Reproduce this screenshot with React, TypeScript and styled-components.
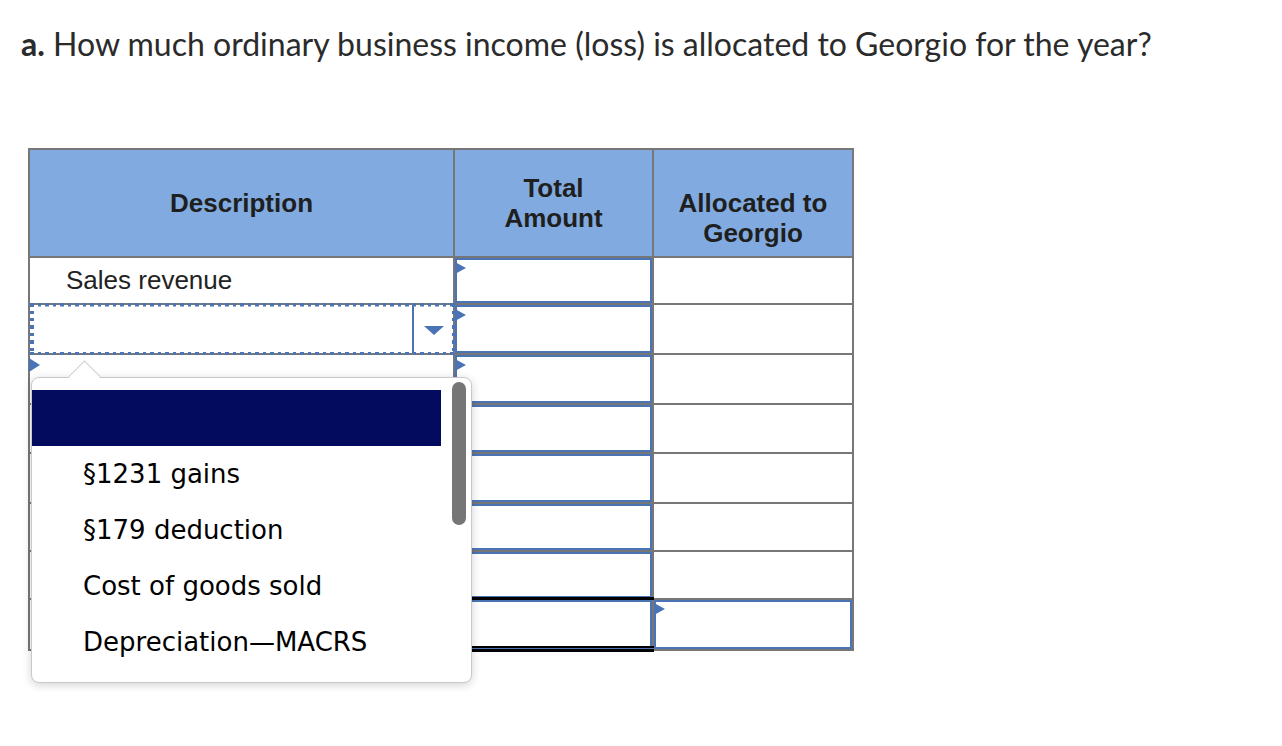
import styled, { createGlobalStyle } from 'styled-components';

//palette
const BLUE = '#4a74b5';
const GRID = '#777777';
const HEAD = '#81abe0';

const GlobalStyle = createGlobalStyle`
    html, body {
        margin: 0;
        padding: 0;
        background: #ffffff;
    }
    body {
        font-family: "Liberation Sans", Arial, sans-serif;
    }
`;

const Page = styled.div`
    padding: 24px 0 40px 21px;
`;

const Question = styled.h1`
    margin: 0;
    font-family: Lato, "Open Sans", sans-serif;
    font-weight: 400;
    font-size: 32px;
    line-height: 40px;
    color: #2b2b2b;

    b {
        font-weight: 700;
    }
`;

const TableWrap = styled.div`
    position: relative;
    width: 826px;
    margin: 84px 0 0 7px;
`;

const Grid = styled.div<{ $rows: string }>`
    display: grid;
    grid-template-columns: 423px 197px 198px;
    grid-template-rows: ${({ $rows }) => $rows};
    gap: 2px;
    padding: 2px;
    background: ${GRID};
`;

const HeadCell = styled.div<{ $drop?: number }>`
    display: flex;
    align-items: center;
    justify-content: center;
    padding-top: ${({ $drop }) => $drop ?? 0}px;
    background: ${HEAD};
    text-align: center;
    font-size: 26px;
    line-height: 30px;
    font-weight: 700;
    color: #1f1f1f;
`;

const Cell = styled.div`
    position: relative;
    background: #ffffff;
`;

const DescText = styled(Cell)`
    display: flex;
    align-items: center;
    padding-left: 36px;
    font-size: 26px;
    color: #222222;
`;

const Marker = styled.span<{ $x?: number; $y?: number; $half?: number }>`
    position: absolute;
    left: ${({ $x }) => $x ?? 0}px;
    top: ${({ $y }) => $y ?? 4}px;
    width: 0;
    height: 0;
    border-left: 11px solid ${BLUE};
    border-top: ${({ $half }) => $half ?? 6}px solid transparent;
    border-bottom: ${({ $half }) => $half ?? 6}px solid transparent;
    z-index: 2;
`;

// the focused select: square dotted frame drawn with gradients
const dots = (dir: string) =>
    `repeating-linear-gradient(${dir}, ${BLUE} 0 3.5px, transparent 3.5px 7.5px)`;

const FocusSelect = styled(Cell)`
    display: flex;
    justify-content: flex-end;

    &::after {
        content: '';
        position: absolute;
        left: 0;
        right: -2px;
        top: -2px;
        bottom: -2px;
        background:
            ${dots('90deg')} top / 100% 3.5px no-repeat,
            ${dots('90deg')} bottom / 100% 3.5px no-repeat,
            ${dots('180deg')} left / 4px 100% no-repeat,
            ${dots('180deg')} right / 3.5px 100% no-repeat;
        pointer-events: none;
    }
`;

const ArrowButton = styled.div`
    width: 39px;
    display: flex;
    align-items: center;
    justify-content: center;
    border-left: 2px solid ${BLUE};

    &::before {
        content: '';
        margin-top: 2px;
        border-top: 9px solid ${BLUE};
        border-left: 10px solid transparent;
        border-right: 10px solid transparent;
    }
`;

const InputBox = styled(Cell)<{ $rule?: 'single' | 'double' }>`
    box-shadow: inset 0 0 0 2px ${BLUE};

    &::after {
        content: '';
        display: ${({ $rule }) => ($rule ? 'block' : 'none')};
        position: absolute;
        left: 0;
        right: -2px;
        bottom: ${({ $rule }) => ($rule === 'double' ? -3 : -2)}px;
        height: ${({ $rule }) => ($rule === 'double' ? 1 : 0)}px;
        border-top: ${({ $rule }) => ($rule === 'double' ? 2 : 3)}px solid #000;
        border-bottom: ${({ $rule }) => ($rule === 'double' ? 3 : 0)}px solid #000;
    }
`;

//dropdown
const Popup = styled.div`
    position: absolute;
    left: 3px;
    top: 229px;
    width: 441px;
    height: 306px;
    box-sizing: border-box;
    padding: 12px 0 0 0;
    background: #ffffff;
    border: 1.5px solid #c9c9c9;
    border-radius: 8px;
    box-shadow: 0 2px 10px rgba(0, 0, 0, 0.18);
    z-index: 10;

    &::before {
        content: '';
        position: absolute;
        left: 41px;
        top: -13px;
        width: 22px;
        height: 22px;
        background: #ffffff;
        border-left: 1.5px solid #cfcfcf;
        border-top: 1.5px solid #cfcfcf;
        transform: rotate(45deg);
    }
`;

const OptionList = styled.ul`
    position: relative;
    margin: 0;
    padding: 0;
    width: 409px;
    list-style: none;
    font-family: "DejaVu Sans", Verdana, sans-serif;
    font-size: 26px;
    color: #000000;
`;

const Option = styled.li<{ $active?: boolean }>`
    height: 56px;
    display: flex;
    align-items: center;
    padding-left: 51px;
    background: ${({ $active }) => ($active ? '#020b5d' : 'transparent')};
    color: ${({ $active }) => ($active ? '#ffffff' : '#000000')};
`;

const Thumb = styled.div`
    position: absolute;
    right: 5px;
    top: 4px;
    width: 14px;
    height: 143px;
    border-radius: 7px;
    background: #767676;
`;

type Rule = 'single' | 'double';

interface Row {
    h: number;
    desc: 'text' | 'focus' | 'select' | 'blank';
    label?: string;
    rule?: Rule;
    allocInput?: boolean;
}

const rows: Row[] = [
    { h: 45, desc: 'text', label: 'Sales revenue' },
    { h: 48, desc: 'focus' },
    { h: 48, desc: 'select' },
    { h: 47, desc: 'blank' },
    { h: 48, desc: 'blank' },
    { h: 46, desc: 'blank' },
    { h: 46, desc: 'blank', rule: 'single' },
    { h: 49, desc: 'blank', rule: 'double', allocInput: true },
];

const options = ['', '§1231 gains', '§179 deduction', 'Cost of goods sold', 'Depreciation—MACRS'];

const DescCell = ({ row }: { row: Row }) => {
    if (row.desc === 'text') return <DescText>{row.label}</DescText>;
    if (row.desc === 'focus')
        return (
            <FocusSelect>
                <ArrowButton />
            </FocusSelect>
        );
    return <Cell>{row.desc === 'select' && <Marker $x={-1} $y={3} $half={7} />}</Cell>;
};

const DescRow = ({ row }: { row: Row }) => (
    <>
        <DescCell row={row} />
        <InputBox $rule={row.rule}>
            <Marker />
        </InputBox>
        {row.allocInput ? (
            <InputBox>
                <Marker $y={3} />
            </InputBox>
        ) : (
            <Cell />
        )}
    </>
);

export default function App() {
    const template = ['106px', ...rows.map((r) => `${r.h}px`)].join(' ');

    return (
        <>
            <GlobalStyle />
            <Page>
                <Question>
                    <b>a.</b> How much ordinary business income (loss) is allocated to Georgio for the year?
                </Question>

                <TableWrap>
                    <Grid $rows={template}>
                        <HeadCell>Description</HeadCell>
                        <HeadCell>
                            Total
                            <br />
                            Amount
                        </HeadCell>
                        <HeadCell $drop={30}>
                            Allocated to
                            <br />
                            Georgio
                        </HeadCell>

                        {rows.map((row, i) => (
                            <DescRow key={i} row={row} />
                        ))}
                    </Grid>

                    <Popup>
                        <OptionList>
                            {options.map((o, i) => (
                                <Option key={i} $active={i === 0}>
                                    {o}
                                </Option>
                            ))}
                        </OptionList>
                        <Thumb />
                    </Popup>
                </TableWrap>
            </Page>
        </>
    );
}
